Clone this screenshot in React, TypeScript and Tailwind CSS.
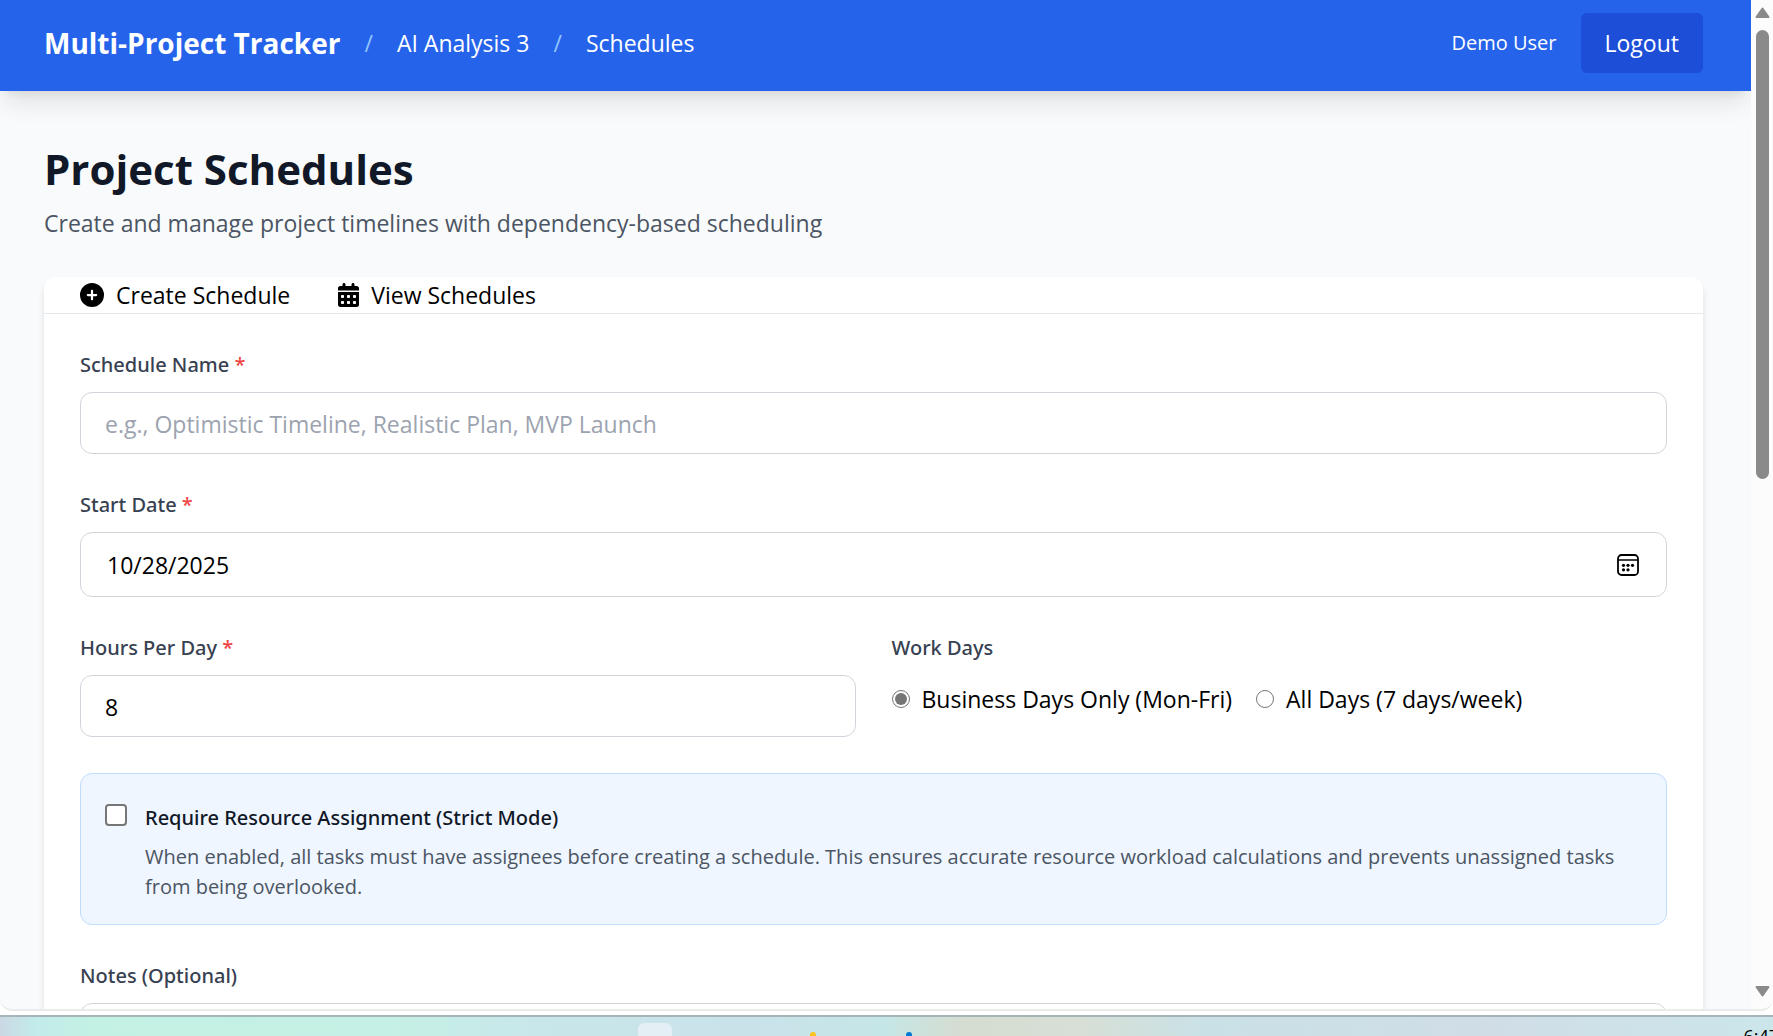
import { FaCirclePlus, FaCalendarDays } from "react-icons/fa6";
import type { ReactNode } from "react";

const field = "block w-full rounded-xl border border-[#d1d5db] bg-white px-6 text-[23px] leading-9 text-black placeholder:text-[#9ca3af]";
const radio = "grid size-[18px] appearance-none place-items-center rounded-full border border-[#767676] bg-white before:size-3 before:rounded-full checked:before:bg-[#767676]";
const labelText = "mb-3 block font-['Noto_Sans',sans-serif] text-[20px] leading-[30px] font-medium text-[#374151]";

function Label({ htmlFor, required, children }: { htmlFor: string; required?: boolean; children: ReactNode }) {
  return (
    <label htmlFor={htmlFor} className={labelText}>
      {children}
      {required && <span className="text-[#ef4444]"> *</span>}
    </label>
  );
}

function Header() {
  return (
    <header className="relative flex shrink-0 items-center justify-between bg-[#2563eb] pt-[13px] pr-12 pb-[18px] pl-11 text-white shadow-[0_15px_23px_-4px_rgb(0_0_0/0.1),0_6px_9px_-6px_rgb(0_0_0/0.1)]">
      <nav className="flex items-center gap-6 text-[23px] leading-9">
        <a href="#home" className="text-[28px] leading-[42px] font-bold">Multi-Project Tracker</a>
        <span className="text-[#93c5fd]">/</span>
        <a href="#project">AI Analysis 3</a>
        <span className="text-[#93c5fd]">/</span>
        <a href="#schedules">Schedules</a>
      </nav>
      <div className="flex items-center gap-6">
        <span className="text-[20px] leading-[30px]">Demo User</span>
        <button type="button" className="rounded-md bg-[#1d4ed8] px-6 py-3 text-[23px] leading-9">Logout</button>
      </div>
    </header>
  );
}

function DateIcon() {
  return (
    <svg viewBox="0 0 22 22" className="size-[22px]" fill="none" stroke="black" strokeWidth="1.8" aria-hidden="true">
      <rect x="1" y="1" width="20" height="20" rx="3.5" />
      <path d="M1 6h20" strokeWidth="1.5" />
      <g fill="black" stroke="none">
        <circle cx="6.5" cy="11.3" r="1.6" />
        <circle cx="11" cy="11.3" r="1.6" />
        <circle cx="15.5" cy="11.3" r="1.6" />
        <circle cx="6.5" cy="15.8" r="1.6" />
        <circle cx="11" cy="15.8" r="1.6" />
      </g>
    </svg>
  );
}

function ScheduleForm() {
  return (
    <form className="flex flex-col gap-9 p-9">
      <div>
        <Label htmlFor="name" required>Schedule Name</Label>
        <input id="name" type="text" placeholder="e.g., Optimistic Timeline, Realistic Plan, MVP Launch" className={field + " pt-[13px] pb-[11px]"} />
      </div>
      <div>
        <Label htmlFor="start" required>Start Date</Label>
        <div className="relative">
          <input id="start" type="text" defaultValue="10/28/2025" className={field + " h-[65px] pl-[26px]"} />
          <button type="button" aria-label="Open calendar" className="absolute inset-y-0 right-7 flex items-center">
            <DateIcon />
          </button>
        </div>
      </div>
      <div className="grid grid-cols-2 gap-9">
        <div>
          <Label htmlFor="hours" required>Hours Per Day</Label>
          <input id="hours" type="text" inputMode="numeric" defaultValue="8" className={field + " pt-[13px] pb-[11px]"} />
        </div>
        <fieldset>
          <legend className={labelText}>Work Days</legend>
          <div className="flex gap-6 pt-1.5 text-[23px] leading-9 text-black">
            <label className="flex items-center gap-3">
              <input type="radio" name="days" defaultChecked className={radio} />
              Business Days Only (Mon-Fri)
            </label>
            <label className="flex items-center gap-3">
              <input type="radio" name="days" className={radio} />
              All Days (7 days/week)
            </label>
          </div>
        </fieldset>
      </div>
      <div className="flex items-start gap-[18px] rounded-xl border border-[#bfdbfe] bg-[#eff6ff] px-6 pt-[26px] pb-[22px]">
        <input id="strict" type="checkbox" className="mt-1 size-[22px] shrink-0 appearance-none rounded border-2 border-[#767676] bg-white checked:bg-blue-600" />
        <div>
          <label htmlFor="strict" className="block font-['Noto_Sans',sans-serif] text-[20px] leading-9 font-medium text-[#111827]">Require Resource Assignment (Strict Mode)</label>
          <p className="mt-1.5 text-[20px] leading-[30px] text-[#4b5563]">
            When enabled, all tasks must have assignees before creating a schedule. This ensures accurate resource workload calculations and prevents unassigned tasks from being overlooked.
          </p>
        </div>
      </div>
      <div>
        <Label htmlFor="notes">Notes (Optional)</Label>
        <textarea id="notes" rows={3} className={field + " py-3"} />
      </div>
    </form>
  );
}

function Scrollbar() {
  return (
    <div className="flex w-[22px] shrink-0 flex-col items-center bg-[#fcfcfc] pt-[7px] pb-3" aria-hidden="true">
      <svg viewBox="0 0 15 11" className="h-[11px] w-[15px]" fill="#8a8a8a" stroke="#8a8a8a" strokeWidth="2" strokeLinejoin="round"><path d="M1.5 10 7.5 1.5l6 8.5z" /></svg>
      <div className="mt-3 min-h-0 flex-1">
        <div className="h-[47%] w-[13px] rounded-full bg-[#8a8a8a]" />
      </div>
      <svg viewBox="0 0 15 11" className="h-[11px] w-[15px]" fill="#8a8a8a" stroke="#8a8a8a" strokeWidth="2" strokeLinejoin="round"><path d="M1.5 1 7.5 9.5l6-8.5z" /></svg>
    </div>
  );
}

function Taskbar() {
  return (
    <footer className="flex h-[21px] shrink-0 overflow-hidden border-t-2 border-[#a5b5b8] bg-[linear-gradient(90deg,#cbd8e4_0%,#c2ebea_2%,#c3f1e4_5%,#c5f0e5_22%,#c8e7ea_30%,#c9e2ea_42%,#c5e6e6_50%,#d5ddd2_54%,#d7dfd6_61%,#c9e1e6_68%,#d0dde7_84%,#cbe6ea_100%)]">
      <div className="flex w-full items-start justify-between">
        <div className="mt-1.5 ml-[638px] flex items-start">
          <div className="h-8 w-[34px] rounded-md bg-[#e4eff5]" />
          <div className="mt-[9px] ml-[138px] size-1.5 rounded-full bg-[#f8c31c]" />
          <div className="mt-[9px] ml-[90px] size-1.5 rounded-full bg-[#0078d4]" />
        </div>
        <span className="mt-2 -mr-1.5 text-[18px] leading-[22px] text-black">6:47</span>
      </div>
    </footer>
  );
}

export default function App() {
  return (
    <div className="flex h-screen flex-col overflow-hidden bg-white font-['Open_Sans',sans-serif]">
      <div className="mb-1 flex min-h-0 flex-1 overflow-hidden rounded-b-xl border-b-2 border-[#ebebeb] bg-[#f9fafb]">
        <div className="flex min-w-0 flex-1 flex-col overflow-hidden">
          <Header />
          <main className="pt-[51px] pr-12 pl-11">
            <h1 className="text-[42px] leading-[54px] font-bold text-[#111827]">Project Schedules</h1>
            <p className="mt-[9px] text-[23px] leading-9 text-[#4b5563]">Create and manage project timelines with dependency-based scheduling</p>
            <section className="mt-9 rounded-xl bg-white shadow-[0_6px_9px_-1px_rgb(0_0_0/0.1),0_3px_6px_-3px_rgb(0_0_0/0.1)]">
              <div className="flex gap-12 border-b border-[#e5e7eb] px-9 text-[23px] leading-9 text-black">
                <button type="button" className="flex items-center gap-3"><FaCirclePlus className="size-6" />Create Schedule</button>
                <button type="button" className="flex items-center gap-3"><FaCalendarDays className="h-6 w-[21px]" />View Schedules</button>
              </div>
              <ScheduleForm />
            </section>
          </main>
        </div>
        <Scrollbar />
      </div>
      <Taskbar />
    </div>
  );
}
